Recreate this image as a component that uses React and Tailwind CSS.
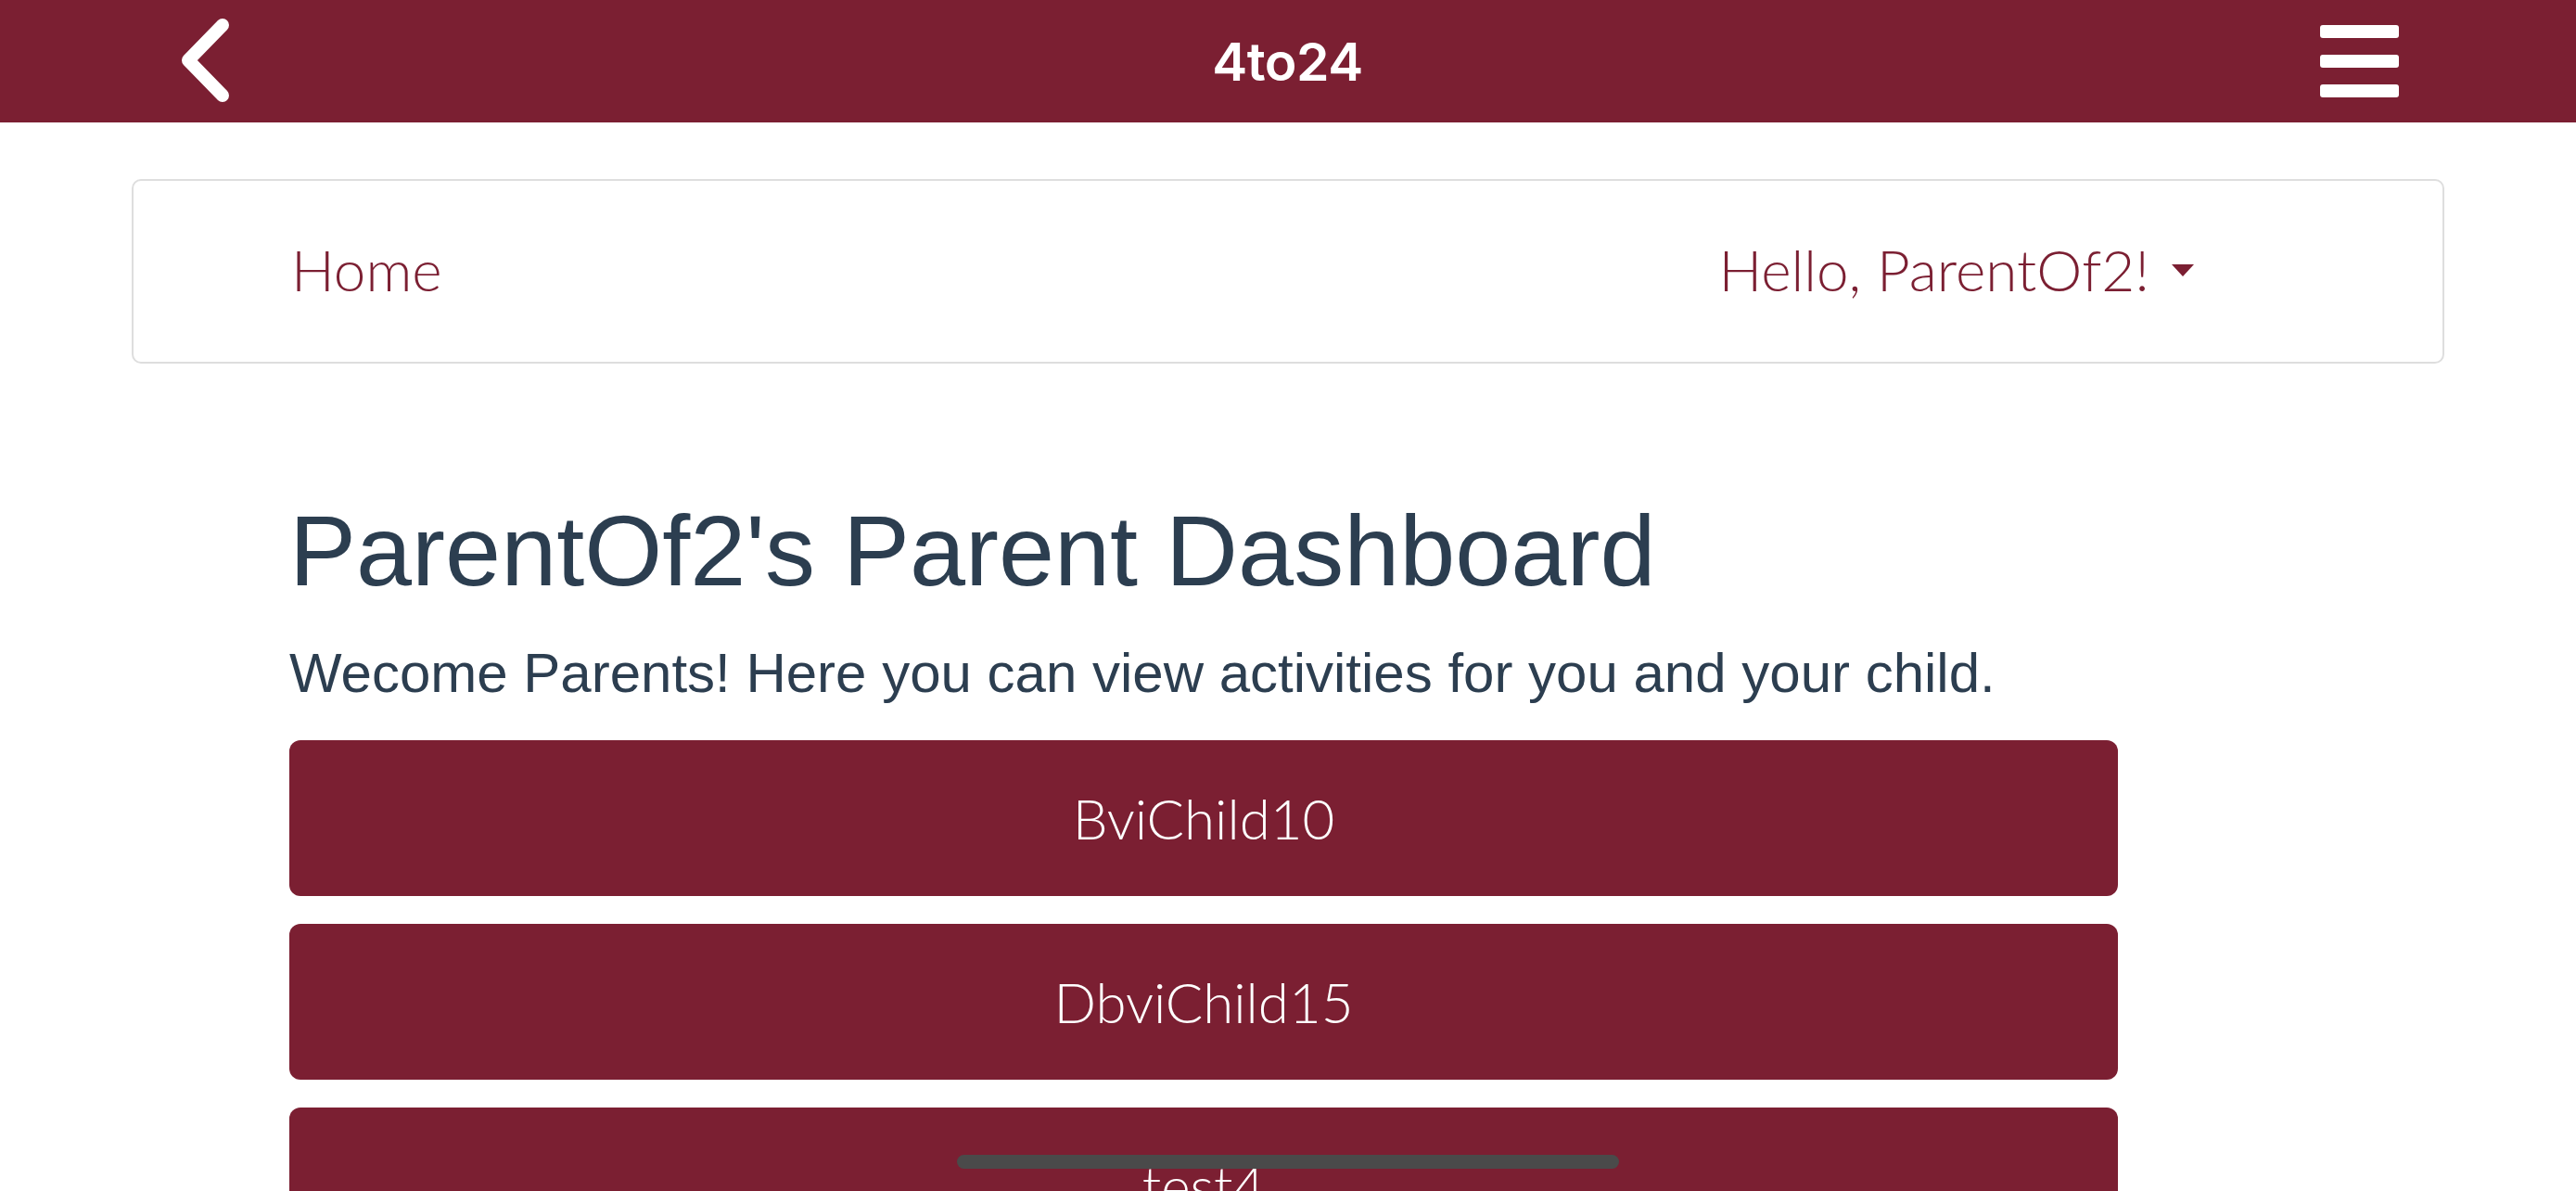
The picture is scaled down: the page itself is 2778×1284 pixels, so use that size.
const children = ['BviChild10', 'DbviChild15', 'test4']

export default function App(){
  return (
    <div className="relative w-[2778px] h-[1284px] overflow-hidden bg-white">
      <header className="h-[132px] bg-[#7b1f32] grid grid-cols-[1fr_auto_1fr] items-center pl-[190px] pr-[191px]">
        <svg width="66" height="96" viewBox="0 0 66 96" className="block">
          <path d="M50 9 L13 47 L50 85" fill="none" stroke="white" strokeWidth="14" strokeLinecap="round" strokeLinejoin="round" />
        </svg>
        <div className="text-white text-[57px] font-semibold font-['Inter','Noto_Sans',sans-serif] leading-none tracking-[-0.5px]">4to24</div>
        <div className="flex flex-col gap-[18px] justify-self-end">
          <span className="block w-[85px] h-[14px] rounded-[3px] bg-white" />
          <span className="block w-[85px] h-[14px] rounded-[3px] bg-white" />
          <span className="block w-[85px] h-[14px] rounded-[3px] bg-white" />
        </div>
      </header>

      <nav className="mt-[61px] mx-[142px] h-[199px] border-2 border-[#dedede] rounded-[10px] flex items-center justify-between pl-[170px] pr-[268px] pb-[6px] font-['Lato','Noto_Sans',sans-serif] font-light text-[#7b1f32] text-[62px] leading-none">
        <a className="block">Home</a>
        <div className="flex items-center gap-[24px]">
          <span>Hello, ParentOf2!</span>
          <svg width="24" height="13" viewBox="0 0 24 13" className="block mt-[4px]">
            <path d="M0 0 L24 0 L12 13 Z" fill="#7b1f32" />
          </svg>
        </div>
      </nav>

      <main className="pl-[312px] font-['Liberation_Sans','Arial',sans-serif] text-[#2c3e50]">
        <h1 className="mt-[148px] text-[108px] leading-none">ParentOf2's Parent Dashboard</h1>
        <p className="mt-[48px] text-[60px] leading-none">Wecome Parents! Here you can view activities for you and your child.</p>
        <div className="mt-[42px] w-[1972px] flex flex-col gap-[30px]">
          {children.map(name => (
            <button key={name} className="h-[168px] rounded-[12px] bg-[#7b1f32] text-white text-[60px] font-light font-['Lato','Noto_Sans',sans-serif] leading-none flex items-center justify-center">
              {name}
            </button>
          ))}
        </div>
      </main>

      <div className="absolute left-[1032px] top-[1245px] w-[714px] h-[15px] rounded-full bg-[#4a4a4a]" />
    </div>
  )
}
